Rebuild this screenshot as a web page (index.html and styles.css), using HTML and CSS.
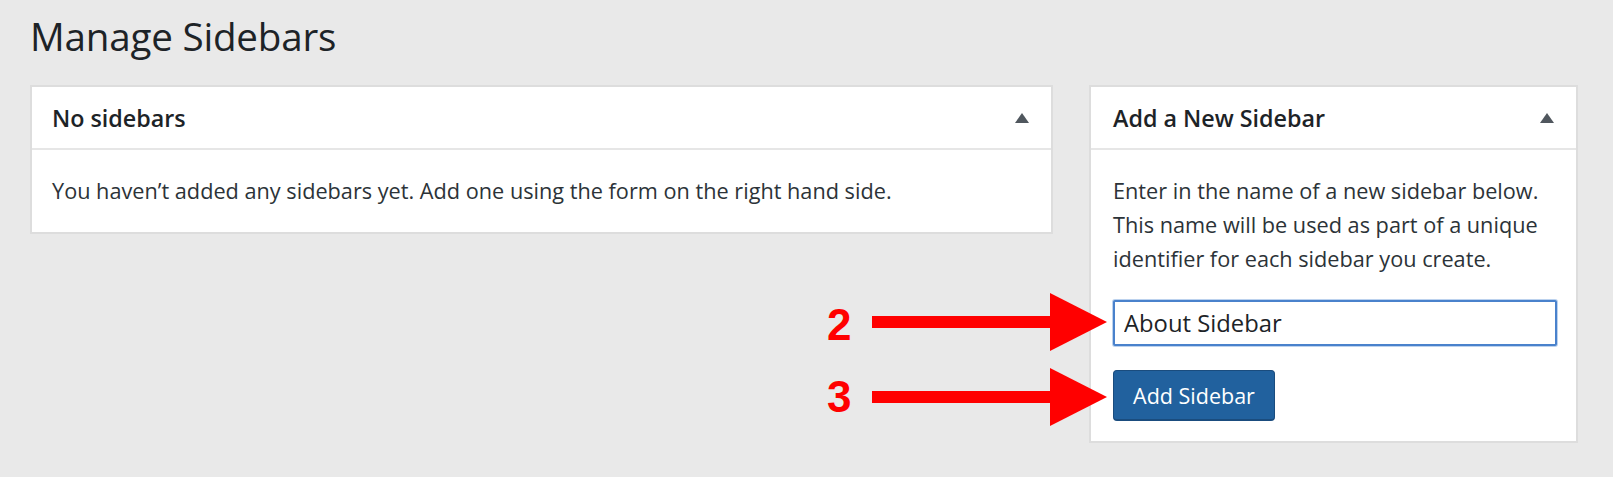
FILE: index.html
```html
<!DOCTYPE html>
<html lang="en">
<head>
<meta charset="utf-8">
<title>Manage Sidebars</title>
<link rel="stylesheet" href="styles.css">
</head>
<body>
<div class="wrap">
  <h1 class="page-title">Manage Sidebars</h1>
  <div class="columns">
    <section class="postbox postbox-main">
      <div class="postbox-header">
        <h2 class="postbox-title">No sidebars</h2>
        <span class="toggle" aria-hidden="true"></span>
      </div>
      <div class="inside">
        <p class="note">You haven’t added any sidebars yet. Add one using the form on the right hand side.</p>
      </div>
    </section>
    <section class="postbox postbox-side">
      <div class="postbox-header">
        <h2 class="postbox-title">Add a New Sidebar</h2>
        <span class="toggle" aria-hidden="true"></span>
      </div>
      <div class="inside">
        <p class="note">Enter in the name of a new sidebar below. This name will be used as part of a unique identifier for each sidebar you create.</p>
        <input class="field" type="text" value="About Sidebar">
        <button class="btn" type="button">Add Sidebar</button>
      </div>
    </section>
  </div>
  <svg class="annot" width="1613" height="477" viewBox="0 0 1613 477">
    <text class="annot-num" x="827" y="340">2</text>
    <rect x="872" y="316" width="180" height="12" fill="#ff0000"/>
    <polygon points="1050,293 1107,322 1050,351" fill="#ff0000"/>
    <text class="annot-num" x="827" y="412">3</text>
    <rect x="872" y="391" width="180" height="12" fill="#ff0000"/>
    <polygon points="1050,368 1107,397 1050,426" fill="#ff0000"/>
  </svg>
</div>
</body>
</html>
```

FILE: styles.css
```css
html, body {
  margin: 0;
  padding: 0;
  background: #e9e9e9;
}

body {
  font-family: "Open Sans", "Noto Sans", "DejaVu Sans", sans-serif;
  color: #1d2327;
  width: 1613px;
  height: 477px;
  overflow: hidden;
}

.wrap {
  position: relative;
  padding: 12px 35px 0 30px;
  height: 465px;
}

.page-title {
  margin: 0 0 25px 0;
  font-size: 38.6px;
  line-height: 48px;
  font-weight: 400;
  font-stretch: 90%;
  color: #1d2327;
  letter-spacing: -0.2px;
}

.columns {
  display: flex;
  align-items: flex-start;
  gap: 36px;
}

.postbox {
  background: #ffffff;
  border: 2px solid #dddddd;
  box-sizing: border-box;
}

.postbox-main {
  width: 1023px;
}

.postbox-side {
  width: 489px;
}

.postbox-header {
  height: 61px;
  display: flex;
  align-items: center;
  justify-content: space-between;
  padding: 0 22px 0 20px;
  border-bottom: 2px solid #e6e6e6;
}

.postbox-side .postbox-header {
  padding: 0 22px 0 22px;
}

.postbox-title {
  margin: 0;
  font-size: 23.3px;
  font-weight: 600;
  font-stretch: 90%;
  color: #1d2327;
}

.toggle {
  width: 0;
  height: 0;
  border-left: 7px solid transparent;
  border-right: 7px solid transparent;
  border-bottom: 10px solid #50575e;
}

.inside {
  padding: 24px 20px 24px 20px;
}

.postbox-side .inside {
  padding: 24px 18px 20px 22px;
  display: flex;
  flex-direction: column;
  align-items: flex-start;
}

.note {
  margin: 0;
  font-size: 21.7px;
  line-height: 34px;
  font-stretch: 90%;
  color: #2c3338;
}

.field {
  margin-top: 24px;
  box-sizing: border-box;
  width: 444px;
  height: 46px;
  padding: 0 9px;
  border: 2px solid #4a82cc;
  border-radius: 2px;
  box-shadow: 0 0 0 1px #bcd2ee;
  font-family: inherit;
  font-size: 23.8px;
  font-stretch: 90%;
  color: #1d2327;
  background: #ffffff;
  outline: none;
}

.btn {
  margin-top: 24px;
  box-sizing: border-box;
  width: 162px;
  height: 51px;
  padding: 0;
  background: #21619e;
  border: 1px solid #1a4c7e;
  border-bottom-width: 2px;
  border-radius: 4px;
  color: #ffffff;
  font-family: inherit;
  font-size: 21.5px;
  font-stretch: 90%;
}

.annot {
  position: absolute;
  left: 0;
  top: 0;
  pointer-events: none;
}

.annot-num {
  font-family: "Liberation Sans", Arial, sans-serif;
  font-weight: 700;
  font-size: 44px;
  fill: #ff0000;
}
```
